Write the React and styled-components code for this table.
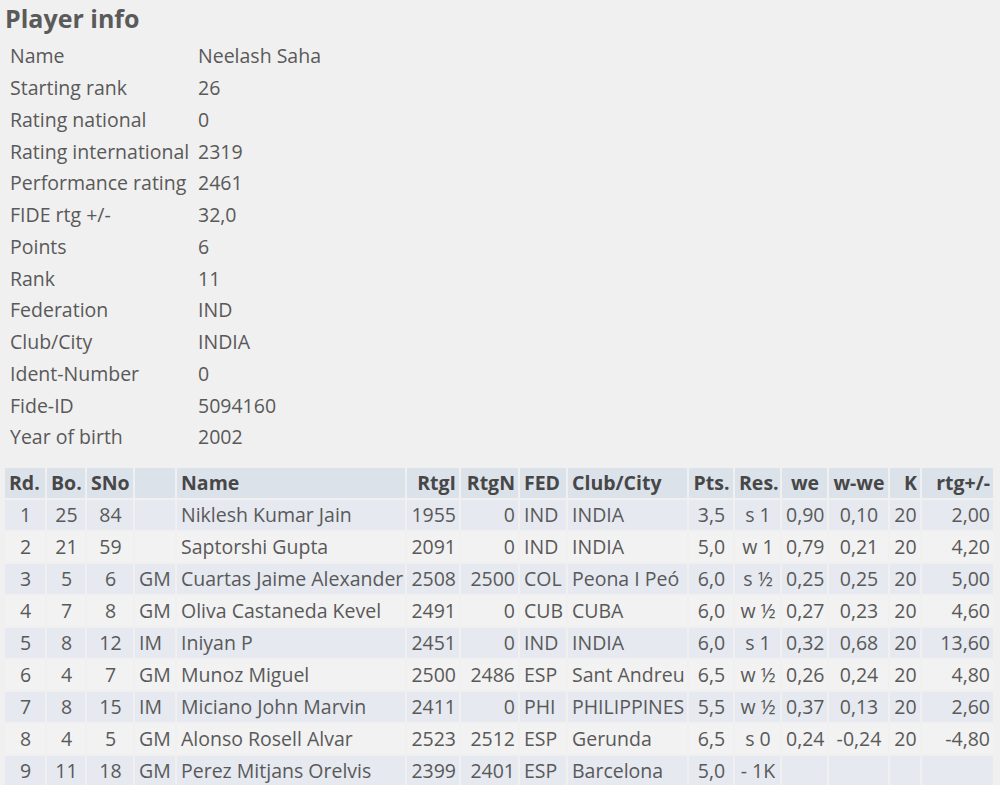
import styled, { createGlobalStyle } from "styled-components";

const GlobalStyle = createGlobalStyle`
  body {
    margin: 0;
    background: #f0f0f0;
    font-family: "Open Sans", "Noto Sans", sans-serif;
    color: #595959;
  }
`;

const info = [
  ["Name", "Neelash Saha"],
  ["Starting rank", "26"],
  ["Rating national", "0"],
  ["Rating international", "2319"],
  ["Performance rating", "2461"],
  ["FIDE rtg +/-", "32,0"],
  ["Points", "6"],
  ["Rank", "11"],
  ["Federation", "IND"],
  ["Club/City", "INDIA"],
  ["Ident-Number", "0"],
  ["Fide-ID", "5094160"],
  ["Year of birth", "2002"],
];

// head = alignment of the header label, align = alignment of the values
const columns = [
  { key: "rd", label: "Rd.", width: 40, head: "left", align: "center" },
  { key: "bo", label: "Bo.", width: 38, head: "left", align: "center" },
  { key: "sno", label: "SNo", width: 46, head: "left", align: "center" },
  { key: "title", label: "", width: 40, head: "left", align: "left" },
  { key: "name", label: "Name", width: 228, head: "left", align: "left" },
  { key: "rtgi", label: "RtgI", width: 52, head: "right", align: "right" },
  { key: "rtgn", label: "RtgN", width: 57, head: "right", align: "right" },
  { key: "fed", label: "FED", width: 46, head: "left", align: "left" },
  { key: "club", label: "Club/City", width: 119, head: "left", align: "left" },
  { key: "pts", label: "Pts.", width: 44, head: "center", align: "center" },
  { key: "res", label: "Res.", width: 45, head: "center", align: "center" },
  { key: "we", label: "we", width: 45, head: "center", align: "center" },
  { key: "wwe", label: "w-we", width: 59, head: "center", align: "center" },
  { key: "k", label: "K", width: 30, head: "right", align: "center" },
  { key: "rtg", label: "rtg+/-", width: 71, head: "right", align: "right" },
];

const rounds = [
  ["1", "25", "84", "", "Niklesh Kumar Jain", "1955", "0", "IND", "INDIA", "3,5", "s 1", "0,90", "0,10", "20", "2,00"],
  ["2", "21", "59", "", "Saptorshi Gupta", "2091", "0", "IND", "INDIA", "5,0", "w 1", "0,79", "0,21", "20", "4,20"],
  ["3", "5", "6", "GM", "Cuartas Jaime Alexander", "2508", "2500", "COL", "Peona I Peó", "6,0", "s ½", "0,25", "0,25", "20", "5,00"],
  ["4", "7", "8", "GM", "Oliva Castaneda Kevel", "2491", "0", "CUB", "CUBA", "6,0", "w ½", "0,27", "0,23", "20", "4,60"],
  ["5", "8", "12", "IM", "Iniyan P", "2451", "0", "IND", "INDIA", "6,0", "s 1", "0,32", "0,68", "20", "13,60"],
  ["6", "4", "7", "GM", "Munoz Miguel", "2500", "2486", "ESP", "Sant Andreu", "6,5", "w ½", "0,26", "0,24", "20", "4,80"],
  ["7", "8", "15", "IM", "Miciano John Marvin", "2411", "0", "PHI", "PHILIPPINES", "5,5", "w ½", "0,37", "0,13", "20", "2,60"],
  ["8", "4", "5", "GM", "Alonso Rosell Alvar", "2523", "2512", "ESP", "Gerunda", "6,5", "s 0", "0,24", "-0,24", "20", "-4,80"],
  ["9", "11", "18", "GM", "Perez Mitjans Orelvis", "2399", "2401", "ESP", "Barcelona", "5,0", "- 1K", "", "", "", ""],
];

function App() {
  return (
    <Page>
      <GlobalStyle />
      <Title>Player info</Title>
      <InfoList>
        {info.map(([label, value]) => (
          <InfoRow key={label}>
            <span>{label}</span>
            <span>{value}</span>
          </InfoRow>
        ))}
      </InfoList>
      <Table>
        <colgroup>
          {columns.map((c) => (
            <col key={c.key} style={{ width: c.width }} />
          ))}
        </colgroup>
        <thead>
          <tr>
            {columns.map((c) => (
              <Th key={c.key} $align={c.head}>
                {c.label}
              </Th>
            ))}
          </tr>
        </thead>
        <tbody>
          {rounds.map((row, i) => (
            <Row key={i} $odd={i % 2 === 0}>
              {row.map((cell, j) => (
                <Td key={j} $align={columns[j].align}>
                  {cell}
                </Td>
              ))}
            </Row>
          ))}
        </tbody>
      </Table>
    </Page>
  );
}

const Page = styled.div`
  padding: 0 5px;
  width: 990px;
`;

const Title = styled.h1`
  margin: 0 0 4px 0;
  font-size: 25px;
  font-weight: 700;
  line-height: 36px;
  color: #5a5a5a;
`;

const InfoList = styled.div`
  display: flex;
  flex-direction: column;
  padding-left: 5px;
  margin-bottom: 13px;
`;

const InfoRow = styled.div`
  display: grid;
  grid-template-columns: 188px auto;
  height: 31.75px;
  align-items: center;
  font-size: 19.5px;
`;

const Table = styled.table`
  border-collapse: separate;
  border-spacing: 2px;
  margin-left: -2px;
  table-layout: fixed;
  width: 992px;
  font-size: 19.5px;
`;

const Th = styled.th`
  box-sizing: border-box;
  background: #dce2ea;
  color: #474747;
  font-weight: 700;
  text-align: ${({ $align }) => $align};
  padding: 0 3px 0 4px;
  height: 30px;
  white-space: nowrap;
  overflow: hidden;
`;

const Row = styled.tr`
  background: ${({ $odd }) => ($odd ? "#e6e9f0" : "#f2f2f2")};
`;

const Td = styled.td`
  box-sizing: border-box;
  text-align: ${({ $align }) => $align};
  padding: 0 3px 0 4px;
  height: 30px;
  white-space: nowrap;
  overflow: hidden;
`;

export default App;
